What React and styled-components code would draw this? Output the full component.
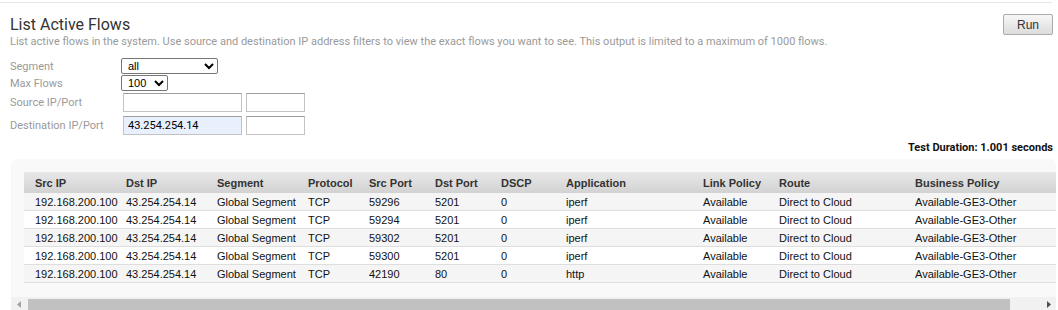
import React from 'react';
import styled, { createGlobalStyle } from 'styled-components';

const GlobalStyle = createGlobalStyle`
  html, body {
    margin: 0;
    padding: 0;
    background: #fff;
    overflow: hidden;
  }
  body {
    font-family: Roboto, "Liberation Sans", Arial, sans-serif;
  }
`;

const TopRule = styled.div`
  margin-top: 2px;
  height: 1px;
  background: #e6e6e6;
  margin-right: 6px;
`;

const Page = styled.div`
  padding: 0 5px 0 10px;
`;

const HeaderRow = styled.div`
  display: flex;
  justify-content: space-between;
  align-items: flex-start;
`;

const Title = styled.h1`
  margin: 12px 0 0;
  font-size: 16px;
  line-height: 19px;
  font-weight: 400;
  color: #333;
`;

const Description = styled.p`
  margin: 1px 0 0;
  font-size: 11px;
  line-height: 13px;
  color: #9a9a9a;
`;

const RunButton = styled.button`
  margin-top: 11px;
  width: 50px;
  height: 21px;
  padding: 0;
  border: 1px solid #ababab;
  border-radius: 2px;
  background: linear-gradient(#f7f7f7, #dcdcdc);
  font-family: "Liberation Sans", Arial, sans-serif;
  font-size: 12px;
  color: #333;
  cursor: pointer;
`;

const Form = styled.div`
  margin-top: 10px;
  display: flex;
  flex-direction: column;
`;

const FieldRow = styled.div`
  display: grid;
  grid-template-columns: 111px auto;
  align-items: center;
  height: ${(p) => p.$height}px;
  margin-top: ${(p) => p.$gap || 0}px;
`;

const Label = styled.label`
  font-size: 11px;
  color: #9a9a9a;
`;

const Controls = styled.div`
  display: flex;
  gap: 4px;
  padding-left: ${(p) => (p.$inset ? 2 : 0)}px;
`;

const Select = styled.select`
  width: ${(p) => p.$width}px;
  height: 16px;
  padding: 0 0 0 2px;
  font-family: "Liberation Sans", Arial, sans-serif;
  font-size: 11px;
  color: #000;
  border: 1px solid #767676;
  border-radius: 2px;
  background: #fff;
`;

const Input = styled.input`
  box-sizing: border-box;
  width: ${(p) => p.$width}px;
  height: 19px;
  padding: 0 4px;
  font-family: Roboto, Arial, sans-serif;
  font-size: 11px;
  color: #000;
  border: 1px solid #c3c3c3;
  border-top-color: #9d9d9d;
  background: ${(p) => (p.$filled ? '#e8f0fe' : '#fff')};
  outline: none;
`;

const Duration = styled.div`
  margin-top: 6px;
  text-align: right;
  font-size: 11px;
  line-height: 13px;
  font-weight: 700;
  color: #111;
`;

const Panel = styled.div`
  margin: 5px -3px 0 1px;
  background: #f9f9f9;
  border-radius: 6px 6px 0 0;
  overflow: hidden;
`;

const PanelBody = styled.div`
  padding: 13px 0 14px 13px;
  overflow: hidden;
`;

const ScrollTrack = styled.div`
  display: flex;
  height: 15px;
  background: #f1f1f1;
`;

const ScrollArrow = styled.div`
  flex: 0 0 15px;
  display: flex;
  align-items: center;
  justify-content: center;
  color: ${(p) => (p.$disabled ? '#a3a3a3' : '#505050')};
`;

const ThumbArea = styled.div`
  flex: 1;
  padding: 2px;
  display: flex;
`;

const Thumb = styled.div`
  height: 11px;
  background: #c1c1c1;
`;

const Table = styled.table`
  border-collapse: collapse;
  table-layout: fixed;
  font-family: "Liberation Sans", Arial, sans-serif;
  font-size: 11px;
  color: #111;
`;

const HeadCell = styled.th`
  height: 21px;
  padding: 0 0 0 11px;
  text-align: left;
  font-weight: 700;
  color: #333;
  background: linear-gradient(#e8e8e8, #d2d2d2);
  white-space: nowrap;
`;

const Row = styled.tr`
  background: ${(p) => (p.$odd ? '#f5f5f5' : '#fff')};
  border-bottom: 1px solid #dedede;
`;

const Cell = styled.td`
  height: 17px;
  padding: 0 0 0 11px;
  white-space: nowrap;
`;

const columns = [
  ['Src IP', 91],
  ['Dst IP', 91],
  ['Segment', 91],
  ['Protocol', 61],
  ['Src Port', 66],
  ['Dst Port', 66],
  ['DSCP', 65],
  ['Application', 137],
  ['Link Policy', 76],
  ['Route', 136],
  ['Business Policy', 170],
];

const flows = [
  ['59296', '5201', 'iperf'],
  ['59294', '5201', 'iperf'],
  ['59302', '5201', 'iperf'],
  ['59300', '5201', 'iperf'],
  ['42190', '80', 'http'],
];

const tableWidth = columns.reduce((s, c) => s + c[1], 0);
// visible part of the scrolled table, as a share of its full width
const thumbShare = 1045 / (tableWidth + 26);

const Arrow = ({ dir }) => (
  <svg width="4" height="7" viewBox="0 0 4 7">
    <path d={dir === 'left' ? 'M4 0 L0 3.5 L4 7 Z' : 'M0 0 L4 3.5 L0 7 Z'} fill="currentColor" />
  </svg>
);

export default function App() {
  return (
    <>
      <GlobalStyle />
      <TopRule />
      <Page>
        <HeaderRow>
          <div>
            <Title>List Active Flows</Title>
            <Description>
              List active flows in the system. Use source and destination IP address filters to view the exact flows you want to see. This output is limited to a maximum of 1000 flows.
            </Description>
          </div>
          <RunButton>Run</RunButton>
        </HeaderRow>

        <Form>
          <FieldRow $height={15}>
            <Label>Segment</Label>
            <Controls>
              <Select $width={97} defaultValue="all">
                <option value="all">all</option>
              </Select>
            </Controls>
          </FieldRow>
          <FieldRow $height={15} $gap={2}>
            <Label>Max Flows</Label>
            <Controls>
              <Select $width={47} defaultValue="100">
                <option value="100">100</option>
              </Select>
            </Controls>
          </FieldRow>
          <FieldRow $height={19} $gap={3}>
            <Label>Source IP/Port</Label>
            <Controls $inset>
              <Input $width={119} />
              <Input $width={59} />
            </Controls>
          </FieldRow>
          <FieldRow $height={19} $gap={4}>
            <Label>Destination IP/Port</Label>
            <Controls $inset>
              <Input $width={119} $filled defaultValue="43.254.254.14" />
              <Input $width={59} />
            </Controls>
          </FieldRow>
        </Form>

        <Duration>Test Duration: 1.001 seconds</Duration>

        <Panel>
          <PanelBody>
            <Table style={{ width: tableWidth }}>
              <colgroup>
                {columns.map(([name, w]) => (
                  <col key={name} style={{ width: w }} />
                ))}
              </colgroup>
              <thead>
                <tr>
                  {columns.map(([name]) => (
                    <HeadCell key={name}>{name}</HeadCell>
                  ))}
                </tr>
              </thead>
              <tbody>
                {flows.map(([src, dst, app], i) => (
                  <Row key={i} $odd={i % 2 === 0}>
                    <Cell>192.168.200.100</Cell>
                    <Cell>43.254.254.14</Cell>
                    <Cell>Global Segment</Cell>
                    <Cell>TCP</Cell>
                    <Cell>{src}</Cell>
                    <Cell>{dst}</Cell>
                    <Cell>0</Cell>
                    <Cell>{app}</Cell>
                    <Cell>Available</Cell>
                    <Cell>Direct to Cloud</Cell>
                    <Cell>Available-GE3-Other</Cell>
                  </Row>
                ))}
              </tbody>
            </Table>
          </PanelBody>
          <ScrollTrack>
            <ScrollArrow $disabled>
              <Arrow dir="left" />
            </ScrollArrow>
            <ThumbArea>
              <Thumb style={{ width: `${Math.round(thumbShare * 1000) / 10}%` }} />
            </ThumbArea>
            <ScrollArrow>
              <Arrow dir="right" />
            </ScrollArrow>
          </ScrollTrack>
        </Panel>
      </Page>
    </>
  );
}
